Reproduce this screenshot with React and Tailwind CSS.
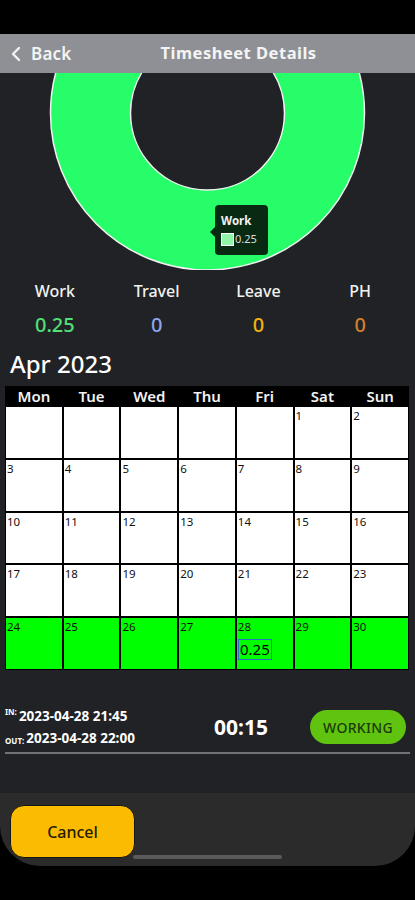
import React from "react";
import { ChevronLeft } from "lucide-react";

const days = ["Mon", "Tue", "Wed", "Thu", "Fri", "Sat", "Sun"];

// April 2023 starts on a Saturday
const weeks = [
  [null, null, null, null, null, 1, 2],
  [3, 4, 5, 6, 7, 8, 9],
  [10, 11, 12, 13, 14, 15, 16],
  [17, 18, 19, 20, 21, 22, 23],
  [24, 25, 26, 27, 28, 29, 30],
];

const stats = [
  { label: "Work", value: "0.25", color: "text-[#4fe07a]" },
  { label: "Travel", value: "0", color: "text-[#8fa6ee]" },
  { label: "Leave", value: "0", color: "text-[#f3b40c]" },
  { label: "PH", value: "0", color: "text-[#d3802e]" },
];

const font = { fontFamily: '"Noto Sans", "Open Sans", sans-serif' };

export default function App() {
  return (
    <div className="w-[415px] h-[900px] bg-black flex flex-col overflow-hidden" style={font}>
      <div className="h-[34px] shrink-0 bg-black" />

      {/* Header */}
      <div className="h-[39px] shrink-0 bg-[#8e9095] flex items-center">
        <div className="flex items-center pl-[4px] text-[#f4f4f4]">
          <ChevronLeft size={24} strokeWidth={2.4} />
          <span className="ml-[3px] text-[17px] font-semibold tracking-[0.2px]">Back</span>
        </div>
        <div className="ml-[89px] text-[16.5px] font-bold text-[#f4f4f4] tracking-[0.5px]">
          Timesheet Details
        </div>
      </div>

      {/* Main */}
      <div className="h-[720px] shrink-0 bg-[#202226] flex flex-col">
        {/* Donut chart */}
        <div className="relative h-[197px] shrink-0 overflow-hidden">
          <svg width="415" height="197" className="block">
            <circle cx="207.5" cy="40" r="117" fill="none" stroke="#27fc69" strokeWidth="80" />
            <circle cx="207.5" cy="40" r="157" fill="none" stroke="#f2f2f2" strokeWidth="1.5" />
            <circle cx="207.5" cy="40" r="77" fill="none" stroke="#f2f2f2" strokeWidth="1.5" />
          </svg>
          <div className="absolute left-[215px] top-[132px] w-[53px] h-[50px] rounded-[4px] bg-[#082a12] flex flex-col justify-center pl-[6px]">
            <div className="absolute -left-[5px] top-[22px] w-0 h-0 border-y-[5px] border-y-transparent border-r-[5px] border-r-[#082a12]" />
            <div className="text-[11.5px] font-bold text-[#f2f2f2] leading-[14px]">Work</div>
            <div className="flex items-center mt-[4px]">
              <div className="w-[13px] h-[13px] bg-[#8ff5a8] border-[1.5px] border-white" />
              <span className="text-[11px] text-[#dcdcdc] leading-[14px] ml-[1px]">0.25</span>
            </div>
          </div>
        </div>

        {/* Stats */}
        <div className="grid grid-cols-4 px-[4px] pt-[10px]">
          {stats.map((s) => (
            <div key={s.label} className="flex flex-col items-center">
              <div className="text-[16px] leading-[22px] font-medium text-[#f2f2f2]">{s.label}</div>
              <div className={`mt-[9px] text-[20px] leading-[28px] font-medium ${s.color}`}>{s.value}</div>
            </div>
          ))}
        </div>

        <div className="mt-[9px] pl-[10px] text-[24px] leading-[32px] font-medium text-white">Apr 2023</div>

        {/* Calendar */}
        <div className="mt-[6px] mx-[5px] w-[404px]">
          <div className="grid grid-cols-7 bg-black h-[20px] items-center">
            {days.map((d) => (
              <div key={d} className="text-center text-[15px] leading-[20px] font-semibold text-[#f2f2f2]">
                {d}
              </div>
            ))}
          </div>
          {weeks.map((week, wi) => (
            <div key={wi} className="grid grid-cols-7">
              {week.map((day, di) => (
                <div
                  key={di}
                  className={`h-[52.8px] border border-black ${wi === 4 ? "bg-[#00ff00]" : "bg-white"}`}
                >
                  {day && (
                    <div className="text-[11.5px] leading-[12px] pt-[3px] pl-[1px] text-[#111]">{day}</div>
                  )}
                  {day === 28 && (
                    <div className="mt-[6px] ml-[1px] w-[34px] h-[21px] border-[1.5px] border-[#2f6fc0] text-[15px] leading-[18px] text-black text-center">
                      0.25
                    </div>
                  )}
                </div>
              ))}
            </div>
          ))}
        </div>

        {/* Clock row */}
        <div className="mt-[36px] ml-[5px] mr-[9px] flex items-center h-[43px]">
          <div className="flex flex-col w-[170px]">
            <div className="flex items-end">
              <span className="text-[8px] font-bold text-white leading-[10px] mb-[8px]">IN:</span>
              <span className="ml-[2px] text-[13.5px] font-bold text-white leading-[18px]">2023-04-28 21:45</span>
            </div>
            <div className="flex items-end mt-[4px]">
              <span className="text-[8px] font-bold text-white leading-[10px] mb-[1px]">OUT:</span>
              <span className="ml-[2px] text-[13.5px] font-bold text-white leading-[18px]">2023-04-28 22:00</span>
            </div>
          </div>
          <div className="w-[132px] text-center text-[21px] font-bold text-white">00:15</div>
          <div className="ml-auto w-[96px] h-[34px] rounded-full bg-[#5fc30f] flex items-center justify-center text-[14px] font-medium text-[#1c3a0a] tracking-[0.3px]">
            WORKING
          </div>
        </div>
        <div className="mt-[3px] mx-[5px] h-[2px] bg-[#717377]" />
      </div>

      {/* Bottom bar */}
      <div className="relative h-[73px] shrink-0 bg-[#2b2b2b] rounded-b-[40px] px-[10px] pt-[12px]">
        <div className="absolute left-[133px] top-[62px] w-[149px] h-[4px] rounded-full bg-[#5a5a5a]" />
        <div className="relative w-[125px] h-[53px] rounded-[14px] bg-[#fbbb00] border-[1.5px] border-[#151515] flex items-center justify-center text-[16px] font-medium text-[#241d00]">
          Cancel
        </div>
      </div>
    </div>
  );
}
